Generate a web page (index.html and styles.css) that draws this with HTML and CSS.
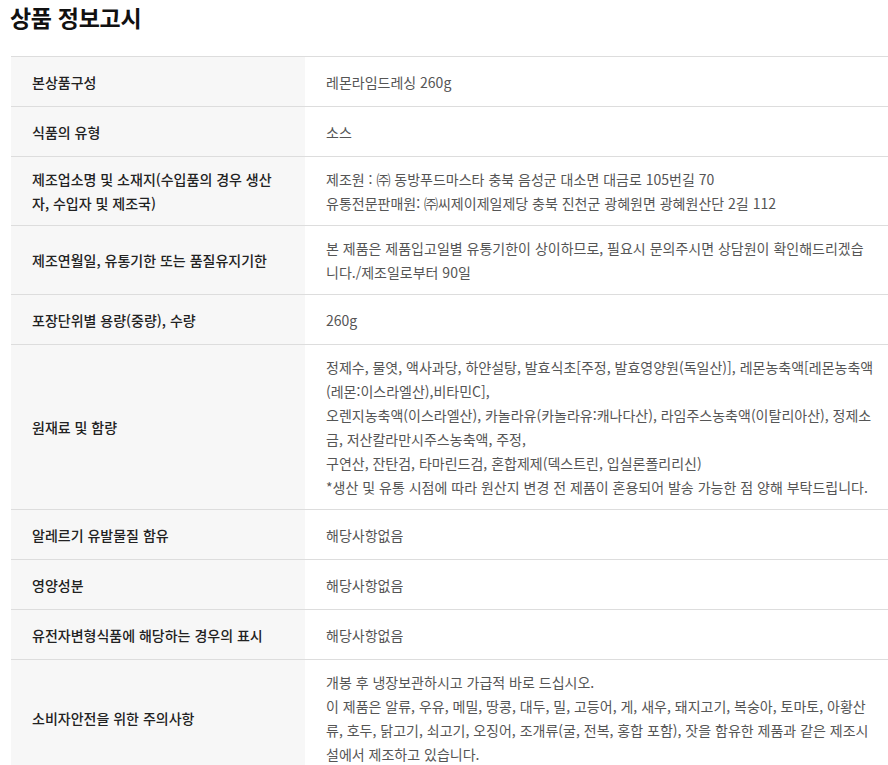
FILE: index.html
```html
<!DOCTYPE html>
<html lang="ko">
<head>
  <meta charset="UTF-8" />
  <meta name="viewport" content="width=device-width, initial-scale=1.0"/>
  <title>상품 정보고시</title>
  <link rel="stylesheet" href="styles.css">
</head>
<body>
  <div class="notice">
    <h2 class="notice-title">상품 정보고시</h2>
    <table class="notice-table">
      <colgroup>
        <col class="col-label">
        <col>
      </colgroup>
      <tbody>
        <tr>
          <th>본상품구성</th>
          <td>레몬라임드레싱 260g</td>
        </tr>
        <tr>
          <th>식품의 유형</th>
          <td>소스</td>
        </tr>
        <tr>
          <th>제조업소명 및 소재지(수입품의 경우 생산자, 수입자 및 제조국)</th>
          <td>제조원 : ㈜ 동방푸드마스타 충북 음성군 대소면 대금로 105번길 70<br>유통전문판매원: ㈜씨제이제일제당 충북 진천군 광혜원면 광혜원산단 2길 112</td>
        </tr>
        <tr>
          <th>제조연월일, 유통기한 또는 품질유지기한</th>
          <td>본 제품은 제품입고일별 유통기한이 상이하므로, 필요시 문의주시면 상담원이 확인해드리겠습니다./제조일로부터 90일</td>
        </tr>
        <tr>
          <th>포장단위별 용량(중량), 수량</th>
          <td>260g</td>
        </tr>
        <tr>
          <th>원재료 및 함량</th>
          <td>정제수, 물엿, 액사과당, 하얀설탕, 발효식초[주정, 발효영양원(독일산)], 레몬농축액[레몬농축액(레몬:이스라엘산),비타민C],<br>오렌지농축액(이스라엘산), 카놀라유(카놀라유:캐나다산), 라임주스농축액(이탈리아산), 정제소금, 저산칼라만시주스농축액, 주정,<br>구연산, 잔탄검, 타마린드검, 혼합제제(덱스트린, 입실론폴리리신)<br>*생산 및 유통 시점에 따라 원산지 변경 전 제품이 혼용되어 발송 가능한 점 양해 부탁드립니다.</td>
        </tr>
        <tr>
          <th>알레르기 유발물질 함유</th>
          <td>해당사항없음</td>
        </tr>
        <tr>
          <th>영양성분</th>
          <td>해당사항없음</td>
        </tr>
        <tr>
          <th>유전자변형식품에 해당하는 경우의 표시</th>
          <td>해당사항없음</td>
        </tr>
        <tr>
          <th>소비자안전을 위한 주의사항</th>
          <td>개봉 후 냉장보관하시고 가급적 바로 드십시오.<br>이 제품은 알류, 우유, 메밀, 땅콩, 대두, 밀, 고등어, 게, 새우, 돼지고기, 복숭아, 토마토, 아황산류, 호두, 닭고기, 쇠고기, 오징어, 조개류(굴, 전복, 홍합 포함), 잣을 함유한 제품과 같은 제조시설에서 제조하고 있습니다.</td>
        </tr>
      </tbody>
    </table>
  </div>
</body>
</html>
```

FILE: styles.css
```css
* {
    margin: 0;
    padding: 0;
    box-sizing: border-box;
}
body {
    font-family: 'Noto Sans CJK KR', 'Noto Sans', sans-serif;
    background: #fff;
    color: #333;
}
.notice {
    padding: 4px 0 0 11px;
}
.notice-title {
    font-size: 23px;
    font-weight: 700;
    line-height: 26px;
    color: #111;
    margin: 0 0 26px -1px;
    letter-spacing: -0.3px;
}
.notice-table {
    width: 877px;
    border-collapse: collapse;
    table-layout: fixed;
    border-top: 1px solid #ddd;
    font-size: 14px;
    line-height: 24px;
}
.col-label {
    width: 294px;
}
.notice-table tr {
    height: 50px;
    border-bottom: 1px solid #ddd;
}
.notice-table th {
    background: #f7f7f7;
    color: #222;
    font-weight: 500;
    text-align: left;
    padding: 10px 21px;
    vertical-align: middle;
}
.notice-table td {
    color: #555;
    padding: 10px 12px 10px 21px;
    vertical-align: middle;
}
```
